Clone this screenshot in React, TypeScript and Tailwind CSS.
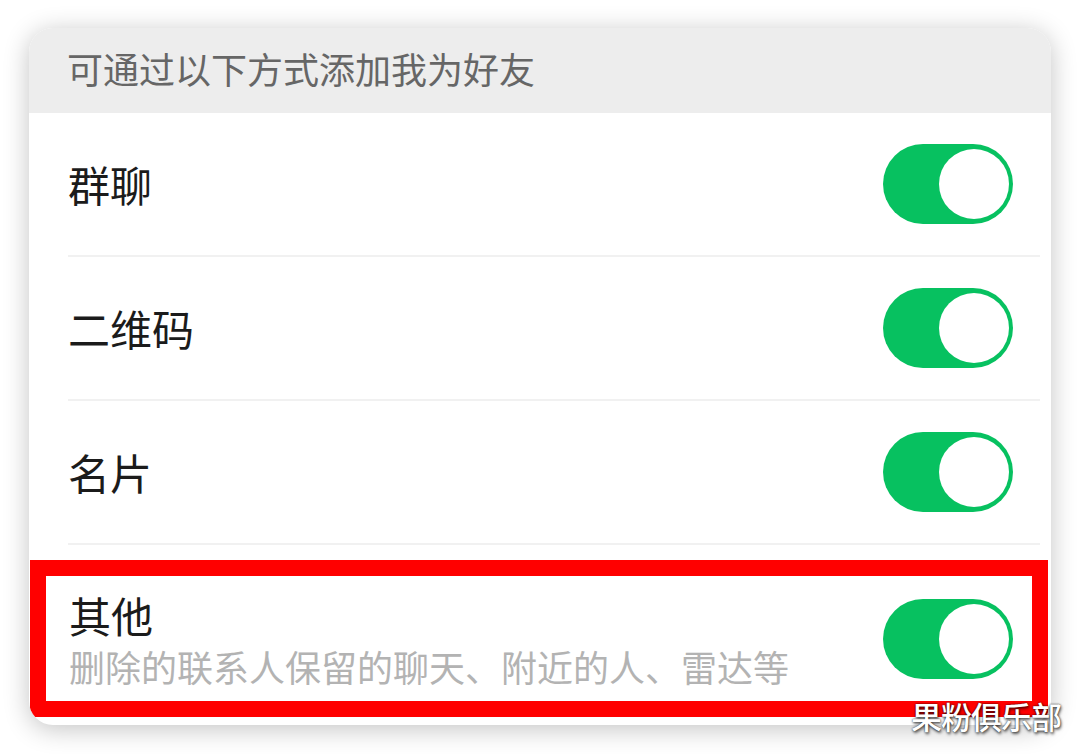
import React from 'react';

const FONT = { fontFamily: '"Noto Sans CJK SC", "Noto Sans", sans-serif' };

function Toggle() {
  return (
    <div className="w-[130px] h-[80px] rounded-full bg-[#07c160] flex items-center justify-end pr-[4px] shrink-0">
      <div className="w-[70px] h-[70px] rounded-full bg-white" />
    </div>
  );
}

function Row({ label }: { label: string }) {
  return (
    <div className="h-[142px] flex items-center justify-between pl-[39px] pr-[38px]">
      <span className="text-[42px] leading-none text-[#1b1b1b]">{label}</span>
      <Toggle />
    </div>
  );
}

function Divider() {
  return <div className="h-[2px] bg-[#f1f1f1] ml-[39px] mr-[11px]" />;
}

export default function App() {
  return (
    <div className="relative w-[1080px] h-[754px] bg-white overflow-hidden pt-[28px] pl-[29px]" style={FONT}>
      <div className="w-[1022px] h-[697px] rounded-[24px] bg-white overflow-hidden shadow-[0_4px_26px_rgba(0,0,0,0.24)] flex flex-col">
        <div className="h-[85px] bg-[#ededed] flex items-center pl-[38px] pb-[5px] shrink-0">
          <span className="text-[36px] leading-none text-[#666666]">可通过以下方式添加我为好友</span>
        </div>
        <Row label="群聊" />
        <Divider />
        <Row label="二维码" />
        <Divider />
        <Row label="名片" />
        <Divider />
        <div className="pt-[15px] pl-[1px] pr-[3px]">
          <div className="h-[157px] border-[16px] border-[#ff0000] flex items-center justify-between pl-[23px] pr-[19px]">
            <div className="flex flex-col">
              <span className="text-[42px] leading-[50px] text-[#1b1b1b]">其他</span>
              <span className="text-[36px] leading-[43px] mt-[5px] text-[#b3b3b3]">删除的联系人保留的聊天、附近的人、雷达等</span>
            </div>
            <Toggle />
          </div>
        </div>
      </div>
      <span className="absolute left-[911px] top-[700px] text-[31px] leading-none font-medium text-white tracking-[-1px] [text-shadow:0_0_2px_rgba(0,0,0,0.9),1px_2px_3px_rgba(0,0,0,0.6)]">
        果粉俱乐部
      </span>
    </div>
  );
}
